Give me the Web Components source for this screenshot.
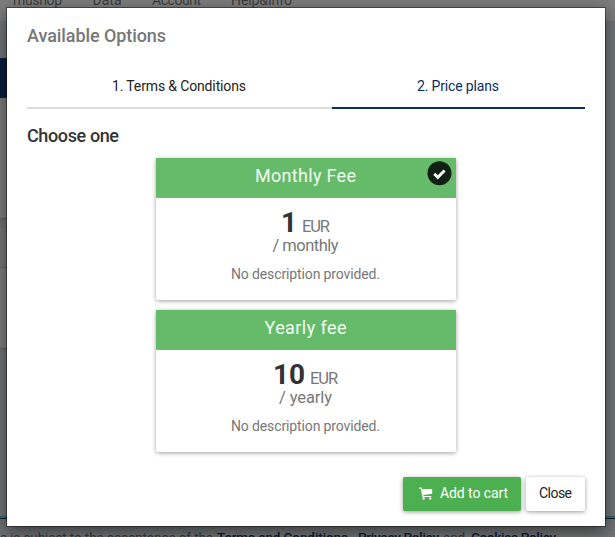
<!DOCTYPE html>
<html lang="en"><head><meta charset="utf-8"><title>Available Options</title>
<style>
html,body{margin:0;height:537px;overflow:hidden}
body{font-family:Roboto,"Open Sans",sans-serif;font-size:14px;color:#777}
</style></head>
<body>
<shop-page></shop-page>
<script>
const define=(name,html,setup)=>customElements.define(name,class extends HTMLElement{
  connectedCallback(){
    if(this.shadowRoot)return;
    const t=document.createElement('template');t.innerHTML=html;
    this.attachShadow({mode:'open'}).append(t.content.cloneNode(true));
    if(setup)setup(this,this.shadowRoot);
  }
});

/* Text tracked so that it takes the width given in its "w" attribute. */
define('tracked-text','<style>:host{display:inline-block;white-space:nowrap}</style><slot></slot>',el=>{
  const n=el.textContent.length,w=+el.getAttribute('w');
  const s=(w-el.getBoundingClientRect().width)/Math.max(1,n-1);
  el.style.letterSpacing=s+'px';el.style.marginRight=-s+'px';
});

define('wizard-tab',`<style>
:host{display:block;box-sizing:border-box;height:46px;padding-top:11px;padding-right:1px;text-align:center;line-height:24px;color:#222;border-bottom:2px solid #ddd}
:host([active]){color:#0a2d64;border-color:#0a2d64}
</style><slot></slot>`);

define('price-card',`<style>
:host{display:block;position:relative;width:300px;height:142px;background:#fff;border-radius:2px;box-shadow:0 1px 4px rgba(0,0,0,.38);text-align:center}
header{height:40px;line-height:36px;background:#66bb6a;color:#f2faf2;font-size:18px;box-sizing:border-box;padding-right:1px}
.price{height:36px;line-height:28px;padding-top:11px;padding-right:1px;box-sizing:border-box;font-size:16.5px;display:flex;justify-content:center;align-items:baseline;gap:5px}
b{font-weight:700;font-size:28px;color:#333}
.period{font-size:16.5px;line-height:24px;height:24px;padding-right:1px}
.desc{line-height:20px;margin-top:6px;padding-right:1px}
svg{display:none;position:absolute;right:4px;top:3px}
:host([selected]) svg{display:block}
</style><header><slot name="title"></slot></header>
<div class="price"><b><slot name="amount"></slot></b><tracked-text w="28">EUR</tracked-text></div>
<div class="period"><slot name="period"></slot></div>
<div class="desc"><tracked-text w="149">No description provided.</tracked-text></div>
<svg width="25" height="25" viewBox="0 0 25 25"><circle cx="12.5" cy="12.2" r="12" fill="#102014"/><path d="M7.3 12.8l3.5 3.5 6.8-6.8" fill="none" stroke="#fff" stroke-width="3"/></svg>`);

define('action-button',`<style>
:host{display:flex;box-sizing:border-box;height:34px;align-items:center;justify-content:center;border-radius:2px;background:#fff;color:#222;box-shadow:0 1px 4px rgba(0,0,0,.4);width:59px;line-height:32px;padding-bottom:2px}
:host([primary]){width:118px;background:#4caf50;color:#fff;padding-left:3px}
svg{display:none;margin-right:7px;margin-top:1px}
:host([primary]) svg{display:block}
</style><svg width="14" height="13" viewBox="0 0 14 13" fill="#fff"><path d="M0 .5h2.7l.4 1.4H13.2v4.8L4.3 8l.2.9h7.7V10H3.4L1.8 1.8H0z"/><circle cx="4.6" cy="11.4" r="1.2"/><circle cx="11.2" cy="11.4" r="1.2"/></svg><slot></slot>`);

define('options-dialog',`<style>
:host{display:flex;flex-direction:column;box-sizing:border-box;width:598px;height:518px;padding:15px 20px;background:#fff;box-shadow:0 0 0 1px rgba(0,0,0,.4),0 5px 15px rgba(0,0,0,.5)}
h1,h2{margin:0;font-size:18px;font-weight:500;line-height:26px;height:26px}
h2{color:#333;margin-top:14px;margin-bottom:1px}
nav{display:grid;grid-template-columns:305px 253px;margin-top:14px}
.cards{display:flex;flex-direction:column;align-items:center;gap:10px;margin-top:8px}
footer{display:flex;justify-content:flex-end;gap:5px;margin-top:25px}
</style>
<h1><tracked-text w="139">Available Options</tracked-text></h1>
<nav><wizard-tab><tracked-text w="134">1. Terms &amp; Conditions</tracked-text></wizard-tab><wizard-tab active><tracked-text w="82">2. Price plans</tracked-text></wizard-tab></nav>
<h2><tracked-text w="92">Choose one</tracked-text></h2>
<div class="cards">
<price-card selected><tracked-text slot="title" w="101">Monthly Fee</tracked-text><span slot="amount">1</span><tracked-text slot="period" w="66">/ monthly</tracked-text></price-card>
<price-card><tracked-text slot="title" w="82">Yearly fee</tracked-text><span slot="amount">10</span><tracked-text slot="period" w="53">/ yearly</tracked-text></price-card>
</div>
<footer><action-button primary><tracked-text w="68">Add to cart</tracked-text></action-button><action-button><tracked-text w="33">Close</tracked-text></action-button></footer>`);

define('shop-page',`<style>
:host{display:block;position:relative;width:615px;height:537px;overflow:hidden;background:#707376}
.top{height:21px;background:#7b7b7b;color:#3b3b3b;font-size:14px;box-sizing:border-box;padding-left:13px;display:flex}
.top span{display:block;height:16px;line-height:16px;margin-top:-8px}
.side{width:20px}
.side div{box-sizing:border-box}
.bottom{height:19px;border-top:1px solid #286368;background:#6d7072;font-size:13.5px;line-height:18px;color:#343638;box-sizing:border-box}
.bottom:before{content:"";display:block;height:2px;background:linear-gradient(#66671d 50%,#0b1a36 50%)}
.bottom p{margin:9px 0 0;white-space:nowrap;display:flex}
.bottom b{font-weight:500;color:#0b1a36}
options-dialog{position:absolute;left:7px;top:8px}
</style>
<div class="top"><span style="width:79.5px"><tracked-text w="49">mushop</tracked-text></span><span style="width:59.5px"><tracked-text w="29">Data</tracked-text></span><span style="width:79px"><tracked-text w="49">Account</tracked-text></span><span><tracked-text w="61">Help&amp;Info</tracked-text></span></div>
<div class="side">
<div style="height:37px"></div><div style="height:40px;background:#0b1d3f"></div><div style="height:120px;background:#7b7b7b;box-shadow:0 1px 2px #555"></div><div style="height:10px"></div><div style="height:40px;background:#777;border-bottom:1px solid #666"></div><div style="height:80px;background:#7b7b7b;box-shadow:0 1px 2px #555"></div><div style="height:168px"></div>
</div>
<div class="bottom"><p><span style="width:217px"><tracked-text w="213">s is subject to the acceptance of the</tracked-text></span><span style="width:141px"><b><tracked-text w="131">Terms and Conditions</tracked-text></b>,</span><b style="width:85px"><tracked-text w="81">Privacy Policy</tracked-text></b><span style="width:28px"><tracked-text w="22">and</tracked-text></span><b><tracked-text w="85">Cookies Policy</tracked-text></b>.</p></div>
<options-dialog></options-dialog>`);
</script></body></html>
